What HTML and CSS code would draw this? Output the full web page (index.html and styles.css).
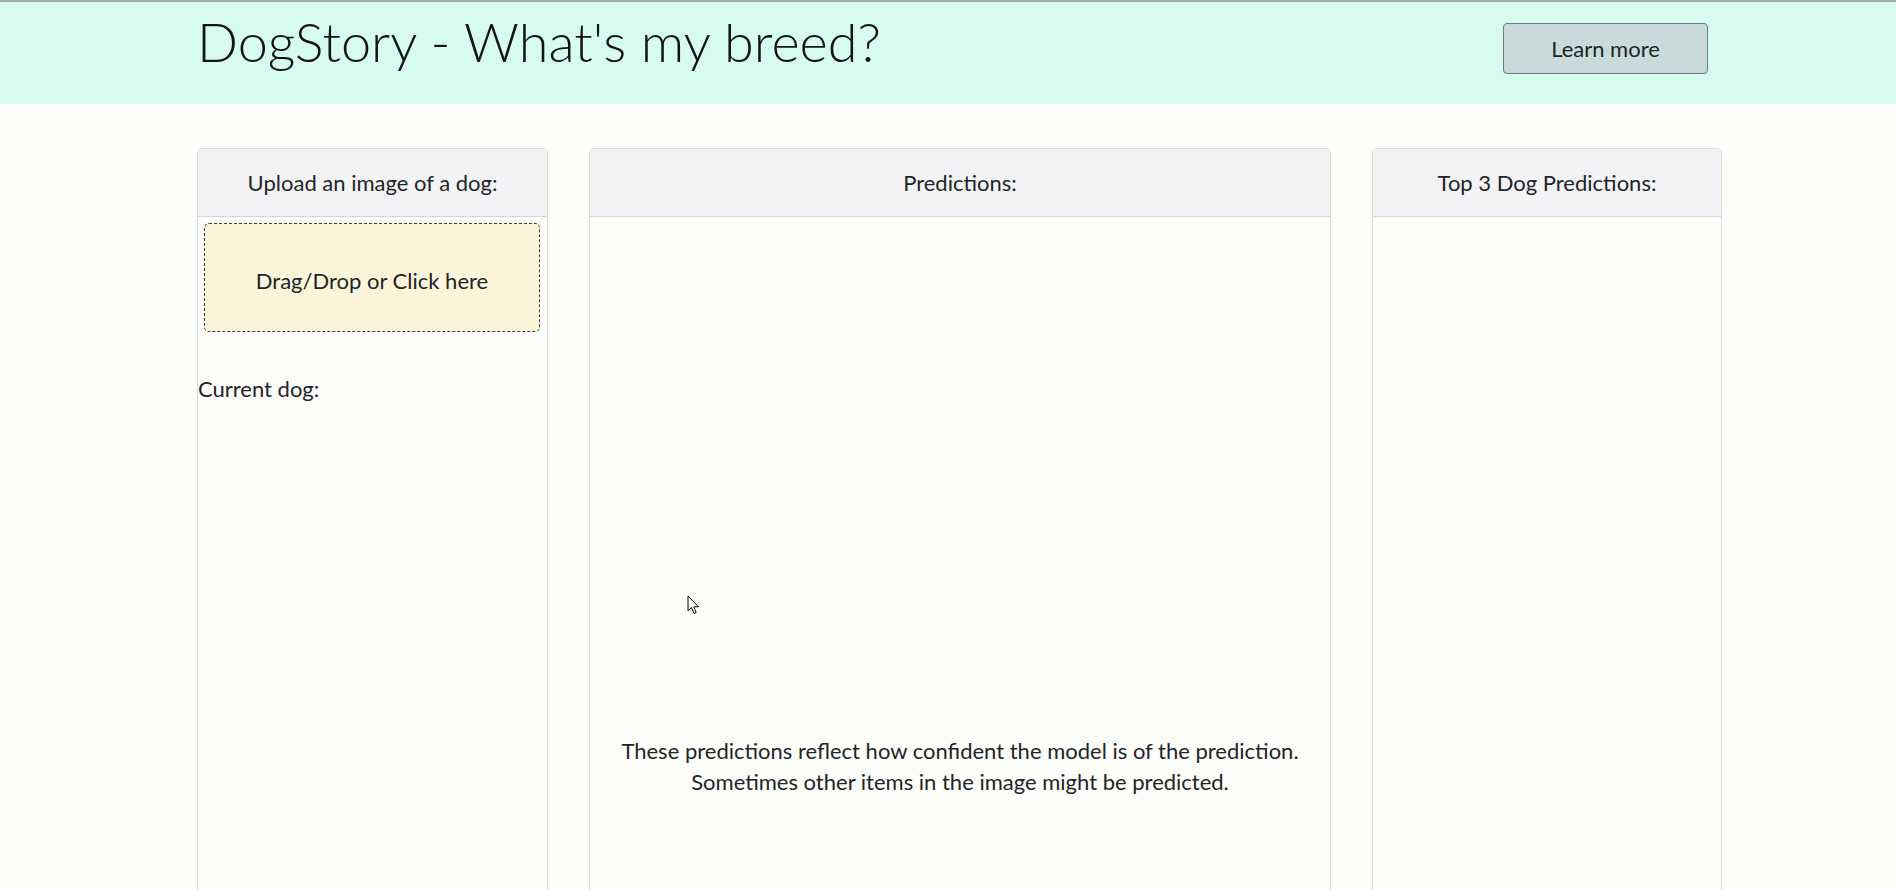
FILE: index.html
```html
<!DOCTYPE html>
<html lang="en">
<head>
<meta charset="utf-8">
<title>DogStory - What's my breed?</title>
<link rel="stylesheet" href="styles.css">
</head>
<body>
<header class="topbar">
  <h1 class="title">DogStory - What's my breed?</h1>
  <button class="btn-learn" type="button">Learn more</button>
</header>
<main class="cards">
  <section class="card">
    <div class="card-header">Upload an image of a dog:</div>
    <div class="card-body">
      <div class="dropzone">Drag/Drop or Click here</div>
      <p class="current">Current dog:</p>
    </div>
  </section>
  <section class="card">
    <div class="card-header">Predictions:</div>
    <div class="card-body">
      <div class="chart"></div>
      <p class="note">These predictions reflect how confident the model is of the prediction.<br>Sometimes other items in the image might be predicted.</p>
    </div>
  </section>
  <section class="card">
    <div class="card-header">Top 3 Dog Predictions:</div>
    <div class="card-body"></div>
  </section>
</main>
<svg class="cursor" width="13" height="20" viewBox="0 0 13 20" aria-hidden="true">
  <path d="M1 1 L1 16 L4.5 12.5 L7 18.5 L9.2 17.6 L6.8 11.8 L11.5 11.8 Z" fill="#ffffff" stroke="#000000" stroke-width="1" stroke-linejoin="miter"/>
</svg>
</body>
</html>
```
FILE: styles.css
```css
html, body {
  margin: 0;
  padding: 0;
  height: 100%;
  overflow: hidden;
}
body {
  background: #fdfdfa;
  color: #212529;
  font-family: Lato, "Open Sans", "Liberation Sans", sans-serif;
  font-size: 22px;
  line-height: 30px;
  position: relative;
}
.topbar {
  box-sizing: border-box;
  height: 104px;
  border-top: 2px solid #a9abaf;
  background: #d5fcef;
  display: flex;
  align-items: flex-start;
  justify-content: space-between;
  padding: 0 188px 0 197px;
}
.title {
  margin: 8px 0 0;
  font-size: 54px;
  font-weight: 300;
  line-height: 1.2;
  color: #141414;
  letter-spacing: 0;
}
.btn-learn {
  margin-top: 21px;
  width: 205px;
  height: 51px;
  box-sizing: border-box;
  border: 1px solid #6f7780;
  border-radius: 4px;
  background: #c8dbda;
  color: #212529;
  font-family: inherit;
  font-size: 22px;
  padding: 0;
  cursor: pointer;
}
.cards {
  display: grid;
  grid-template-columns: 351px 742px 350px;
  column-gap: 41px;
  padding: 44px 0 0 197px;
  align-items: start;
}
.card {
  box-sizing: border-box;
  border: 1px solid #d9d9e0;
  border-radius: 5px;
  min-height: 800px;
  display: flex;
  flex-direction: column;
}
.card-header {
  height: 67px;
  border-bottom: 1px solid #d6d6de;
  background: #f3f3f5;
  border-radius: 4px 4px 0 0;
  display: flex;
  align-items: center;
  justify-content: center;
  font-size: 22px;
}
.card-body {
  flex: 1;
  display: flex;
  flex-direction: column;
}
.dropzone {
  margin: 6px 7px 0 6px;
  height: 109px;
  box-sizing: border-box;
  border: 1px dashed #3a3a44;
  border-radius: 5px;
  background: #fcf5da;
  display: flex;
  align-items: center;
  justify-content: center;
  padding-top: 6px;
}
.current {
  margin: 42px 0 0;
}
.chart {
  height: 518px;
}
.note {
  margin: 0;
  text-align: center;
  line-height: 31px;
}
.cursor {
  position: absolute;
  left: 687px;
  top: 595px;
}
```
